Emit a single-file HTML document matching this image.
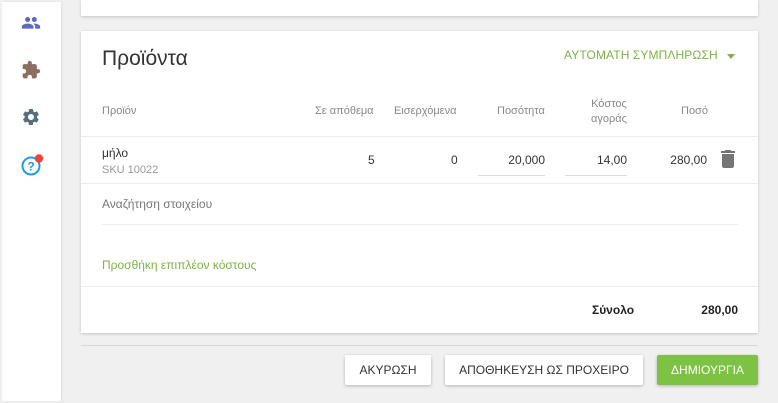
<!DOCTYPE html>
<html><head><meta charset="utf-8"><style>
*{margin:0;padding:0;box-sizing:border-box}
body{width:778px;height:403px;background:#f0f0f0;font-family:"Liberation Sans",sans-serif;position:relative;overflow:hidden;color:#333}
.a{position:absolute;white-space:nowrap}
.side{position:absolute;left:2px;top:2px;width:59px;height:399px;background:#fff;box-shadow:1px 0 2px rgba(0,0,0,.08)}
.card{position:absolute;left:81px;width:677px;background:#fff;box-shadow:0 1px 3px rgba(0,0,0,.18)}
.h{font-size:11px;color:#888}
.hl{position:absolute;height:1px;background:#ececec}
.n{font-size:12px}
.btn{position:absolute;top:355px;height:30px;background:#fff;box-shadow:0 1px 3px rgba(0,0,0,.25);font-size:12px;color:#333;display:flex;align-items:center;justify-content:center;border-radius:2px}
</style></head><body>
<div class="side">
<svg class="a" style="left:19px;top:13px" width="20" height="14" viewBox="0 4 24 14"><path fill="#5c6bc0" d="M16 11c1.66 0 2.99-1.34 2.99-3S17.66 5 16 5c-1.66 0-3 1.34-3 3s1.34 3 3 3zm-8 0c1.66 0 2.99-1.34 2.99-3S9.660 5 8 5C6.34 5 5 6.34 5 8s1.34 3 3 3zm0 2c-2.33 0-7 1.17-7 3.5V19h14v-2.5c0-2.330-4.67-3.5-7-3.5zm8 0c-.29 0-.62.02-.97.05 1.16.84 1.97 1.97 1.97 3.45V19h6v-2.5c0-2.33-4.67-3.5-7-3.5z"/></svg>
<svg class="a" style="left:19px;top:58px" width="20" height="20" viewBox="0 0 24 24"><path fill="#8d6e63" d="M20.5 11H19V7c0-1.1-.9-2-2-2h-4V3.5C13 2.12 11.88 1 10.5 1S8 2.12 8 3.5V5H4c-1.1 0-1.99.9-1.99 2v3.8H3.5c1.49 0 2.7 1.21 2.7 2.7s-1.21 2.7-2.7 2.7H2V20c0 1.1.9 2 2 2h3.8v-1.5c0-1.49 1.21-2.7 2.7-2.7 1.49 0 2.7 1.21 2.7 2.7V22H17c1.1 0 2-.9 2-2v-4h1.5c1.38 0 2.5-1.12 2.5-2.5S21.88 11 20.5 11z"/></svg>
<svg class="a" style="left:19px;top:105px" width="20" height="20" viewBox="0 0 24 24"><path fill="#546e7a" d="M19.14 12.94c.04-.3.06-.61.06-.94 0-.32-.02-.64-.07-.94l2.03-1.58a.49.49 0 00.12-.61l-1.92-3.32a.49.49 0 00-.59-.22l-2.39.96c-.5-.38-1.03-.7-1.62-.94l-.36-2.54a.48.48 0 00-.48-.41h-3.84c-.24 0-.43.17-.47.41l-.36 2.54c-.59.24-1.13.57-1.62.94l-2.39-.96a.49.49 0 00-.59.22L2.74 8.87c-.12.21-.8.47.12.61l2.03 1.58c-.5.3-.9.63-.9.94s.2.64.7.94l-2.03 1.58a.49.49 0 00-.12.61l1.920 3.32c.12.22.37.29.59.22l2.39-.96c.5.38 1.03.7 1.62.94l.36 2.54c.5.24.24.41.48.41h3.84c.24 0 .44-.17.47-.41l.36-2.54c.59-.24 1.13-.56 1.62-.94l2.39.96c.22.08.47 0 .59-.22l1.92-3.32c.12-.22.07-.47-.12-.61l-2.01-1.58zM12 15.6c-1.98 0-3.6-1.62-3.6-3.6s1.62-3.6 3.6-3.6 3.6 1.62 3.6 3.6-1.62 3.6-3.6 3.6z"/></svg>
<svg class="a" style="left:18px;top:150px" width="26" height="26" viewBox="0 0 26 26"><circle cx="11" cy="14" r="8.5" fill="none" stroke="#1e9be9" stroke-width="2"/><text x="11" y="18.5" font-size="12" font-weight="bold" fill="#1e9be9" text-anchor="middle" font-family="Liberation Sans">?</text><circle cx="19" cy="6.5" r="4.2" fill="#f44336"/></svg>
</div>
<div class="card" style="top:0;height:16px"></div>
<div class="card" style="top:31px;height:302px">
<div class="a" style="left:21px;top:16px;font-size:21px;color:#333">Προϊόντα</div>
<div class="a" style="left:483px;top:17px;font-size:12px;color:#7cb342;letter-spacing:0.1px">ΑΥΤΟΜΑΤΗ ΣΥΜΠΛΗΡΩΣΗ</div>
<div class="a" style="left:646px;top:23px;width:0;height:0;border-left:4.5px solid transparent;border-right:4.5px solid transparent;border-top:5px solid #7cb342"></div>
<div class="a h" style="left:21px;top:74px">Προϊόν</div>
<div class="a h" style="left:234px;top:74px">Σε απόθεμα</div>
<div class="a h" style="left:313px;top:74px">Εισερχόμενα</div>
<div class="a h" style="left:416px;top:74px">Ποσότητα</div>
<div class="a h" style="left:510px;top:66px;text-align:center;line-height:15px">Κόστος<br>αγοράς</div>
<div class="a h" style="left:600px;top:74px">Ποσό</div>
<div class="hl" style="left:0;right:0;top:105px"></div>
<div class="a" style="left:21px;top:115px;font-size:12px">μήλο</div>
<div class="a" style="left:21px;top:133px;font-size:11px;color:#999">SKU 10022</div>
<div class="a n" style="left:287px;top:122px">5</div>
<div class="a n" style="left:370px;top:122px">0</div>
<div class="a n" style="left:397px;top:122px;width:67px;text-align:right">20,000</div>
<div class="hl" style="left:397px;width:67px;top:144px;background:#ddd"></div>
<div class="a n" style="left:484px;top:122px;width:62px;text-align:right">14,00</div>
<div class="hl" style="left:484px;width:62px;top:144px;background:#ddd"></div>
<div class="a n" style="left:566px;top:122px;width:60px;text-align:right">280,00</div>
<svg class="a" style="left:640px;top:119px" width="14" height="18" viewBox="5 3 14 18"><path fill="#757575" d="M6 19c0 1.1.9 2 2 2h8c1.1 0 2-.9 2-2V7H6v12zM19 4h-3.5l-1-1h-5l-1 1H5v2h14V4z"/></svg>
<div class="hl" style="left:0;right:0;top:152px"></div>
<div class="a" style="left:21px;top:166px;font-size:12px;color:#777">Αναζήτηση στοιχείου</div>
<div class="hl" style="left:21px;right:20px;top:193px"></div>
<div class="a" style="left:21px;top:227px;font-size:12px;color:#7cb342">Προσθήκη επιπλέον κόστους</div>
<div class="hl" style="left:0;right:0;top:255px"></div>
<div class="a" style="left:511px;top:272px;font-size:12px;font-weight:bold;color:#222">Σύνολο</div>
<div class="a" style="left:597px;top:272px;width:60px;text-align:right;font-size:12px;font-weight:bold;color:#222">280,00</div>
</div>
<div class="hl" style="left:81px;width:677px;top:345px;background:#d8d8d8"></div>
<div class="btn" style="left:345px;width:86px">ΑΚΥΡΩΣΗ</div>
<div class="btn" style="left:445px;width:198px">ΑΠΟΘΗΚΕΥΣΗ ΩΣ ΠΡΟΧΕΙΡΟ</div>
<div class="btn" style="left:657px;width:101px;background:#7dc242;color:#fff">ΔΗΜΙΟΥΡΓΙΑ</div>
</body></html>
